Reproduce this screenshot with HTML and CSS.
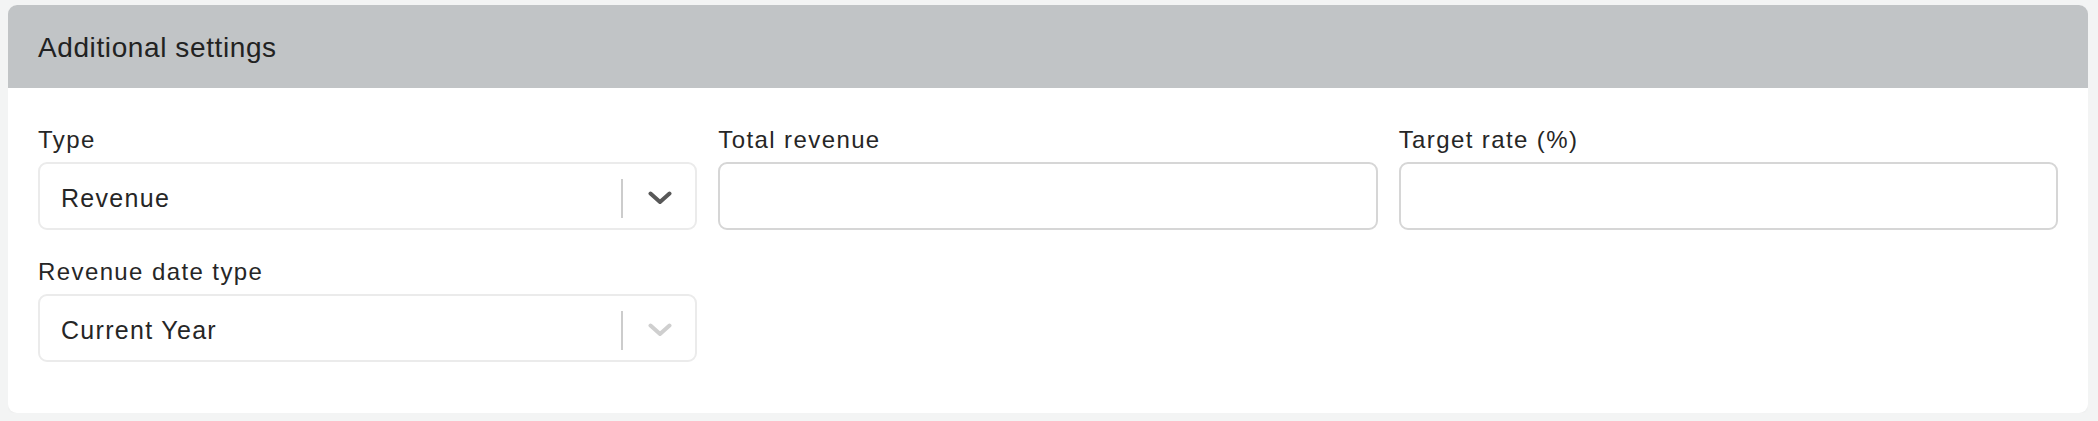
FILE: index.html
```html
<!DOCTYPE html>
<html lang="en">
<head>
<meta charset="utf-8">
<title>Additional settings</title>
<link rel="stylesheet" href="styles.css">
</head>
<body>
<section class="card">
  <header class="card-header">
    <h2 class="card-title">Additional settings</h2>
  </header>
  <div class="card-body">
    <div class="field">
      <label class="field-label">Type</label>
      <div class="select">
        <span class="select-value">Revenue</span>
        <span class="select-sep"></span>
        <span class="select-arrow">
          <svg width="24" height="14" viewBox="0 0 24 14"><polyline points="2.5,2.5 12,11 21.5,2.5" fill="none" stroke="#585858" stroke-width="4" stroke-linecap="round" stroke-linejoin="round"/></svg>
        </span>
      </div>
    </div>
    <div class="field">
      <label class="field-label">Total revenue</label>
      <div class="input"></div>
    </div>
    <div class="field">
      <label class="field-label">Target rate (%)</label>
      <div class="input"></div>
    </div>
    <div class="field">
      <label class="field-label">Revenue date type</label>
      <div class="select">
        <span class="select-value">Current Year</span>
        <span class="select-sep"></span>
        <span class="select-arrow">
          <svg width="24" height="14" viewBox="0 0 24 14"><polyline points="2.5,2.5 12,11 21.5,2.5" fill="none" stroke="#cfcfcf" stroke-width="4" stroke-linecap="round" stroke-linejoin="round"/></svg>
        </span>
      </div>
    </div>
  </div>
</section>
</body>
</html>
```

FILE: styles.css
```css
html, body {
  background: #f3f4f4;
}
body {
  margin: 5px 10px 8px 8px;
  font-family: "Liberation Sans", Arial, Helvetica, sans-serif;
  color: #232323;
}
.card {
  background: #ffffff;
  border-radius: 9px;
  box-shadow: 0 1px 3px rgba(0, 0, 0, 0.03);
  overflow: hidden;
}
.card-header {
  background: #c1c4c6;
  height: 83px;
  display: flex;
  align-items: center;
  padding: 0 30px;
}
.card-title {
  margin: 0;
  font-size: 28px;
  font-weight: normal;
  letter-spacing: 0.6px;
  color: #222;
  padding-top: 2px;
}
.card-body {
  display: grid;
  grid-template-columns: repeat(3, 1fr);
  column-gap: 21px;
  row-gap: 28px;
  padding: 38px 30px 51px 30px;
}
.field {
  display: flex;
  flex-direction: column;
}
.field-label {
  font-size: 24px;
  line-height: 28px;
  letter-spacing: 1.4px;
  color: #262626;
  margin-bottom: 8px;
}
.select, .input {
  box-sizing: border-box;
  height: 68px;
  border-radius: 9px;
  background: #fff;
}
.input {
  border: 2px solid #d6d6d6;
}
.select {
  border: 2px solid #ebebeb;
  display: flex;
  align-items: center;
}
.select-value {
  flex: 1;
  padding-left: 21px;
  padding-top: 5px;
  font-size: 25px;
  letter-spacing: 1.3px;
  color: #262626;
}
.select-sep {
  width: 2px;
  height: 39px;
  background: #cccccc;
  margin-top: 4px;
}
.select-arrow {
  display: flex;
  align-items: center;
  padding: 4px 23px 0 25px;
}
.select-arrow svg {
  display: block;
}
```
